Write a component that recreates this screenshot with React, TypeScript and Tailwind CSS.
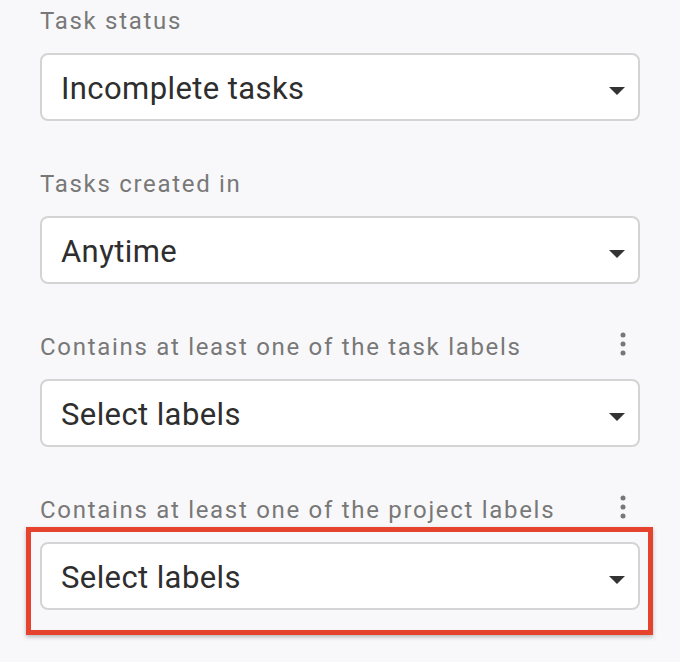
import React from "react";

type Filter = { label: string; value: string; menu?: boolean; highlight?: boolean };

const filters: Filter[] = [
  { label: "Task status", value: "Incomplete tasks" },
  { label: "Tasks created in", value: "Anytime" },
  { label: "Contains at least one of the task labels", value: "Select labels", menu: true },
  { label: "Contains at least one of the project labels", value: "Select labels", menu: true, highlight: true },
];

function Kebab() {
  return (
    <svg width="6" height="24" viewBox="0 0 6 24" className="text-[#777]">
      <circle cx="3" cy="3" r="2.5" fill="currentColor" />
      <circle cx="3" cy="12" r="2.5" fill="currentColor" />
      <circle cx="3" cy="21" r="2.5" fill="currentColor" />
    </svg>
  );
}

function Caret() {
  return (
    <svg width="16" height="8" viewBox="0 0 16 8" className="text-[#333]">
      <path d="M0 0h16L8 8z" fill="currentColor" />
    </svg>
  );
}

function FilterSelect({ filter }: { filter: Filter }) {
  return (
    <div className="mb-[48px]">
      <div className="flex items-center justify-between h-[30px] mb-[17px]">
        <span className="text-[24px] leading-[30px] tracking-[1.7px] text-[#787878]">{filter.label}</span>
        {filter.menu && (
          <span className="mr-[14px] mb-[7px] flex items-center">
            <Kebab />
          </span>
        )}
      </div>
      <div className="relative">
        <div className="h-[68px] bg-white border-2 border-[#d4d4d4] rounded-[8px] flex items-center justify-between pl-[19px] pr-[13px]">
          <span className="text-[31px] tracking-[0.4px] text-[#2e2e2e] pt-[4px]">{filter.value}</span>
          <span className="mt-[8px]">
            <Caret />
          </span>
        </div>
        {filter.highlight && (
          <span className="absolute -left-[14px] -top-[15px] -right-[13px] -bottom-[25px] border-[5px] border-[#e5432d] shadow-[0_2px_4px_rgba(0,0,0,0.25)] pointer-events-none" />
        )}
      </div>
    </div>
  );
}

export default function App() {
  return (
    <div
      className="w-[680px] h-[662px] overflow-hidden bg-[#f8f8fa] px-[40px] pt-[6px]"
      style={{ fontFamily: "Roboto, 'Noto Sans', sans-serif" }}
    >
      {filters.map((f) => (
        <FilterSelect key={f.label} filter={f} />
      ))}
    </div>
  );
}
